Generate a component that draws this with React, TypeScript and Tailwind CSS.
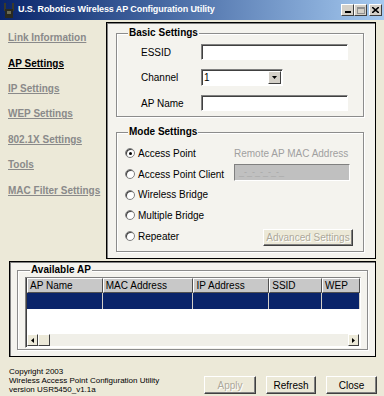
const Radio = ({ checked = false }: { checked?: boolean }) => (
  <span className="relative inline-block w-[10px] h-[10px] rounded-full bg-white border border-[#808080] shadow-[inset_1px_1px_0_#404040]">
    {checked && <span className="absolute left-[2.5px] top-[2.5px] w-[3px] h-[3px] rounded-full bg-black" />}
  </span>
);

const WinButton = ({ label, disabled = false, w }: { label: string; disabled?: boolean; w: string }) => (
  <button
    className={`${w} h-[18px] text-[10px] bg-[#ece9d8] border border-t-white border-l-white border-r-[#404040] border-b-[#404040] shadow-[inset_-1px_-1px_0_#808080] ${
      disabled ? "text-[#aca899] [text-shadow:1px_1px_0_#fff]" : "text-black"
    }`}
  >
    {label}
  </button>
);

const Sunken = "bg-white border border-t-[#808080] border-l-[#808080] border-r-white border-b-white shadow-[inset_1px_1px_0_#404040]";

const navItems = [
  { label: "Link Information", active: false },
  { label: "AP Settings", active: true },
  { label: "IP Settings", active: false },
  { label: "WEP Settings", active: false },
  { label: "802.1X Settings", active: false },
  { label: "Tools", active: false },
  { label: "MAC Filter Settings", active: false },
];

const modes = ["Access Point", "Access Point Client", "Wireless Bridge", "Multiple Bridge", "Repeater"];

const columns = [
  { label: "AP Name", w: "w-[76px]" },
  { label: "MAC Address", w: "w-[91px]" },
  { label: "IP Address", w: "w-[76px]" },
  { label: "SSID", w: "w-[53px]" },
  { label: "WEP", w: "w-[38px]" },
];

const App = () => {
  return (
    <div className="w-[384px] h-[396px] bg-[#ece9d8] flex flex-col font-['Liberation_Sans',Arial,sans-serif] overflow-hidden">
      {/* title bar */}
      <div className="h-[20px] flex items-center bg-linear-to-r from-[#0a246a] to-[#a6caf0] pl-[3px] pr-[2px]">
        <svg width="12" height="15" viewBox="0 0 12 15">
          <rect x="1" y="0" width="2" height="8" fill="#3a3a2a" />
          <rect x="9" y="0" width="2" height="8" fill="#3a3a2a" />
          <rect x="2" y="6" width="8" height="9" fill="#2a2a20" />
          <rect x="4" y="8" width="4" height="3" fill="#6b6b55" />
        </svg>
        <span className="ml-[3px] text-white font-bold text-[9px] tracking-[-0.1px]">U.S. Robotics Wireless AP Configuration Utility</span>
        <div className="ml-auto flex items-center">
          <div className="w-[13px] h-[12px] bg-[#d4d0c8] border border-t-white border-l-white border-r-[#404040] border-b-[#404040] flex items-end justify-center pb-[2px]">
            <div className="w-[6px] h-[2px] bg-black" />
          </div>
          <div className="w-[13px] h-[12px] bg-[#d4d0c8] border border-t-white border-l-white border-r-[#404040] border-b-[#404040] flex items-center justify-center">
            <div className="w-[8px] h-[7px] border border-t-2 border-[#909090]" />
          </div>
          <div className="ml-[2px] w-[13px] h-[12px] bg-[#d4d0c8] border border-t-white border-l-white border-r-[#404040] border-b-[#404040] flex items-center justify-center">
            <svg width="7" height="6" viewBox="0 0 7 6">
              <path d="M0 0L7 6M7 0L0 6" stroke="#000" strokeWidth="1.6" />
            </svg>
          </div>
        </div>
      </div>

      {/* main */}
      <div className="flex h-[241px]">
        <div className="w-[106px] pl-[8px] pt-[5px] flex flex-col">
          {navItems.map((item) => (
            <div key={item.label} className="h-[25.4px] flex items-center">
              <span className={`text-[10px] font-bold underline ${item.active ? "text-black" : "text-[#8a8a8a]"}`}>{item.label}</span>
            </div>
          ))}
        </div>

        <div className="mt-[2px] w-[270px] h-[237px] border border-black shadow-[inset_1px_1px_0_#808080] bg-[#f4f3ee] pl-[9px] flex flex-col">
          <fieldset className="mt-[4px] w-[248px] h-[90px] border border-[#8c8c8c] shadow-[1px_1px_0_#fff,inset_1px_1px_0_#fff]">
            <legend className="ml-[11px] px-[1px] bg-[#f4f3ee] text-[10px] font-bold leading-[12px]">Basic Settings</legend>
            <div className="pt-[5px] pl-[24px] flex flex-col gap-[9px] text-[10px]">
              <div className="flex items-center h-[16px]">
                <span className="w-[60px]">ESSID</span>
                <div className={`w-[147px] h-[16px] ${Sunken}`} />
              </div>
              <div className="flex items-center h-[17px]">
                <span className="w-[60px]">Channel</span>
                <div className={`w-[82px] h-[17px] ${Sunken} flex items-center pl-[2px]`}>
                  <span className="flex-1">1</span>
                  <div className="w-[13px] h-[13px] mr-[1px] bg-[#d4d0c8] border border-t-white border-l-white border-r-[#404040] border-b-[#404040] flex items-center justify-center">
                    <svg width="5" height="3" viewBox="0 0 5 3">
                      <path d="M0 0H5L2.5 3Z" fill="#000" />
                    </svg>
                  </div>
                </div>
              </div>
              <div className="flex items-center h-[16px]">
                <span className="w-[60px]">AP Name</span>
                <div className={`w-[147px] h-[16px] ${Sunken}`} />
              </div>
            </div>
          </fieldset>

          <fieldset className="mt-[9px] w-[248px] h-[126px] border border-[#8c8c8c] shadow-[1px_1px_0_#fff,inset_1px_1px_0_#fff]">
            <legend className="ml-[11px] px-[1px] bg-[#f4f3ee] text-[10px] font-bold leading-[12px]">Mode Settings</legend>
            <div className="flex pl-[8px] pt-[5px] text-[10px]">
              <div className="w-[109px] flex flex-col">
                {modes.map((m, i) => (
                  <div key={m} className="h-[20.7px] flex items-center gap-[3px]">
                    <Radio checked={i === 0} />
                    <span>{m}</span>
                  </div>
                ))}
              </div>
              <div className="flex flex-col">
                <div className="h-[20px] flex items-center text-[#a0a0a0]">Remote AP MAC Address</div>
                <div className="mt-[1px] w-[116px] h-[17px] bg-[#c0c0c0] border border-t-[#808080] border-l-[#808080] border-r-white border-b-white text-[#a8a8a8] text-[9px] pl-[4px] leading-[15px]">
                  _-_-_-_-_-_
                </div>
                <button className="mt-[48px] ml-[29px] w-[90px] h-[17px] text-[10px] bg-[#ece9d8] border border-t-white border-l-white border-r-[#404040] border-b-[#404040] shadow-[inset_-1px_-1px_0_#808080] text-[#aca899] [text-shadow:1px_1px_0_#fff]">
                  Advanced Settings
                </button>
              </div>
            </div>
          </fieldset>
        </div>
      </div>

      {/* available ap */}
      <div className="ml-[9px] w-[367px] h-[96px] border border-black shadow-[inset_1px_1px_0_#808080] bg-[#f4f3ee] pl-[7px]">
        <fieldset className="mt-[2px] w-[351px] h-[86px] border border-[#8c8c8c] shadow-[1px_1px_0_#fff,inset_1px_1px_0_#fff] pl-[7px]">
          <legend className="ml-[5px] px-[1px] bg-[#f4f3ee] text-[10px] font-bold leading-[12px]">Available AP</legend>
          <div className={`mt-[1px] w-[336px] h-[71px] ${Sunken} flex flex-col`}>
            <div className="flex h-[15px] ml-[1px]">
              {columns.map((c) => (
                <div
                  key={c.label}
                  className={`${c.w} bg-[#c8c8c8] border border-t-white border-l-white border-r-[#505050] border-b-[#505050] text-[10px] pl-[2px] leading-[13px]`}
                >
                  {c.label}
                </div>
              ))}
            </div>
            <div className="flex h-[16px] ml-[1px]">
              {columns.map((c) => (
                <div key={c.label} className={`${c.w} bg-[#0a246a] border-r border-[#d4d0c8]`} />
              ))}
            </div>
            <div className="flex-1" />
            <div className="flex h-[12px] ml-[1px] mb-[1px] mr-[1px] bg-[#ece9d8]">
              <div className="w-[11px] h-[12px] bg-[#ece9d8] border border-t-white border-l-white border-r-[#404040] border-b-[#404040] flex items-center justify-center">
                <svg width="3" height="5" viewBox="0 0 3 5"><path d="M3 0V5L0 2.5Z" fill="#000" /></svg>
              </div>
              <div className="w-[12px] h-[12px] bg-[#ece9d8] border border-t-white border-l-white border-r-[#404040] border-b-[#404040]" />
              <div className="flex-1 bg-[#f0efe8]" />
              <div className="w-[11px] h-[12px] bg-[#ece9d8] border border-t-white border-l-white border-r-[#404040] border-b-[#404040] flex items-center justify-center">
                <svg width="3" height="5" viewBox="0 0 3 5"><path d="M0 0V5L3 2.5Z" fill="#000" /></svg>
              </div>
            </div>
          </div>
        </fieldset>
      </div>

      {/* footer */}
      <div className="flex items-start pl-[9px] pr-[5px] pt-[10px]">
        <div className="flex flex-col text-[8px] leading-[9px] w-[190px]">
          <span>Copyright 2003</span>
          <span>Wireless Access Point Configuration Utility</span>
          <span>version USR5450_v1.1a</span>
        </div>
        <div className="ml-[5px] mt-[9px] flex gap-[10px]">
          <WinButton label="Apply" disabled w="w-[52px]" />
          <WinButton label="Refresh" w="w-[50px]" />
          <WinButton label="Close" w="w-[51px]" />
        </div>
      </div>
    </div>
  );
};

export default App;
